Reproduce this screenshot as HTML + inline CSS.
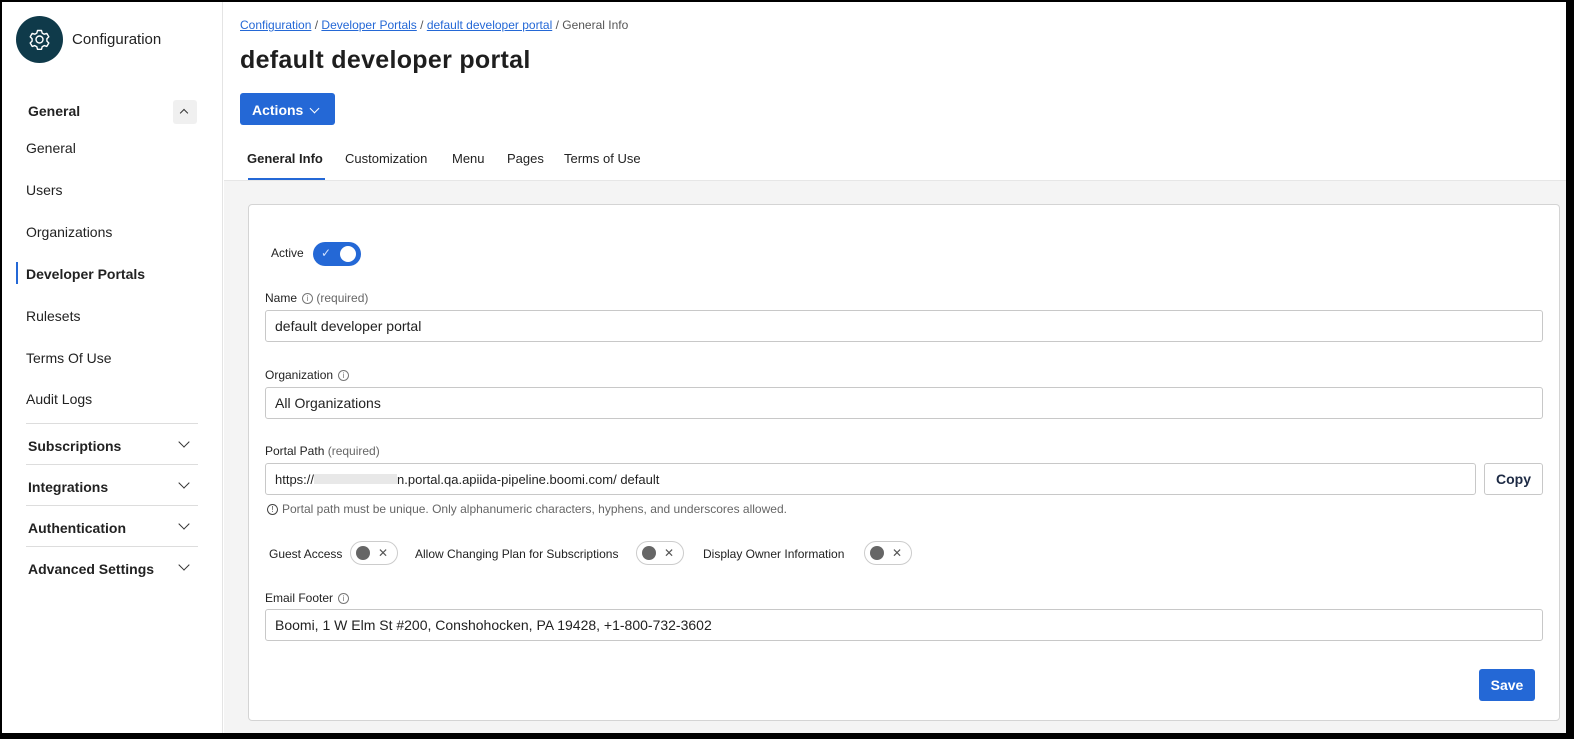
<!DOCTYPE html>
<html><head><style>
*{box-sizing:border-box;margin:0;padding:0}
body{width:1574px;height:739px;background:#000;font-family:"Liberation Sans",sans-serif;color:#222;position:relative;overflow:hidden}
.frame{position:absolute;left:2px;top:2px;width:1564px;height:731px;background:#fff;overflow:hidden}
.a{position:absolute;white-space:nowrap}
.side{position:absolute;left:0;top:0;width:221px;height:731px;background:#fff;border-right:1px solid #e4e4e4}
.nav{font-size:14px;color:#222}
.sec{font-size:14px;font-weight:bold;color:#222}
.hr{position:absolute;left:24px;width:172px;height:1px;background:#ddd}
.chev{position:absolute;width:8px;height:8px;border-right:1.5px solid #333;border-bottom:1.5px solid #333;transform:rotate(45deg)}
.inp{position:absolute;border:1px solid #c8c8c8;border-radius:3px;background:#fff;font-size:14px;padding-left:9px;display:flex;align-items:center}
.lbl{font-size:12px;color:#222}
.req{color:#666}
.info{display:inline-block;width:11px;height:11px;border:1px solid #777;border-radius:50%;font-size:8px;text-align:center;line-height:9px;color:#777;vertical-align:middle;margin-left:5px}
.tog{position:absolute;width:48px;height:24px;border:1px solid #ccc;border-radius:12px;background:#fff}
.tog .k{position:absolute;left:5px;top:4px;width:14px;height:14px;border-radius:50%;background:#666}
.tog .x{position:absolute;right:9px;top:4px;font-size:12px;line-height:14px;color:#555}
</style></head><body>
<div class="frame">
<div class="side">
 <div class="a" style="left:14px;top:14px;width:47px;height:47px;border-radius:50%;background:#0f3a4a">
  <svg width="47" height="47" viewBox="0 0 47 47"><circle cx="23.5" cy="23.5" r="3.5" fill="none" stroke="#fff" stroke-width="1.4"/><path d="M21.5 14.5h4l.7 2.6 2 1.1 2.6-.8 2 3.4-1.9 1.9v2.4l1.9 1.9-2 3.4-2.6-.8-2 1.1-.7 2.6h-4l-.7-2.6-2-1.1-2.6.8-2-3.4 1.9-1.9v-2.4l-1.9-1.9 2-3.4 2.6.8 2-1.1z" fill="none" stroke="#fff" stroke-width="1.4" stroke-linejoin="round"/></svg>
 </div>
 <div class="a" style="left:70px;top:29px;font-size:15px">Configuration</div>
 <div class="a sec" style="left:26px;top:101px">General</div>
 <div class="a" style="left:171px;top:98px;width:24px;height:24px;background:#f0f0f0;border-radius:3px"><div class="chev" style="left:8px;top:10px;transform:rotate(225deg);width:6px;height:6px"></div></div>
 <div class="a nav" style="left:24px;top:138px">General</div>
 <div class="a nav" style="left:24px;top:180px">Users</div>
 <div class="a nav" style="left:24px;top:222px">Organizations</div>
 <div class="a" style="left:14px;top:260px;width:2px;height:22px;background:#2468d6"></div>
 <div class="a nav" style="left:24px;top:264px;font-weight:bold">Developer Portals</div>
 <div class="a nav" style="left:24px;top:306px">Rulesets</div>
 <div class="a nav" style="left:24px;top:348px">Terms Of Use</div>
 <div class="a nav" style="left:24px;top:389px">Audit Logs</div>
 <div class="hr" style="top:421px"></div>
 <div class="a sec" style="left:26px;top:436px">Subscriptions</div><div class="chev" style="left:178px;top:436px"></div>
 <div class="hr" style="top:462px"></div>
 <div class="a sec" style="left:26px;top:477px">Integrations</div><div class="chev" style="left:178px;top:477px"></div>
 <div class="hr" style="top:503px"></div>
 <div class="a sec" style="left:26px;top:518px">Authentication</div><div class="chev" style="left:178px;top:518px"></div>
 <div class="hr" style="top:544px"></div>
 <div class="a sec" style="left:26px;top:559px">Advanced Settings</div><div class="chev" style="left:178px;top:559px"></div>
</div>
<div class="a" style="left:222px;top:178px;width:1342px;height:553px;background:#f4f4f4;border-top:1px solid #e6e6e6"></div>
<div class="a" style="left:238px;top:16px;font-size:12px;color:#555"><u style="color:#2468d6">Configuration</u> / <u style="color:#2468d6">Developer Portals</u> / <u style="color:#2468d6">default developer portal</u> / General Info</div>
<div class="a" style="left:238px;top:44px;font-size:25px;font-weight:bold;color:#1e1e1e;letter-spacing:0.3px">default developer portal</div>
<div class="a" style="left:238px;top:91px;width:95px;height:32px;background:#2468d6;border-radius:3px;color:#fff;font-size:14px;font-weight:bold;padding:9px 0 0 12px">Actions <span style="display:inline-block;width:7px;height:7px;border-right:1.3px solid #fff;border-bottom:1.3px solid #fff;transform:rotate(45deg);margin:0 0 3px 4px"></span></div>
<div class="a" style="left:245px;top:149px;font-size:13px;font-weight:bold">General Info</div>
<div class="a" style="left:246px;top:176px;width:77px;height:2px;background:#2468d6"></div>
<div class="a" style="left:343px;top:149px;font-size:13px">Customization</div>
<div class="a" style="left:450px;top:149px;font-size:13px">Menu</div>
<div class="a" style="left:505px;top:149px;font-size:13px">Pages</div>
<div class="a" style="left:562px;top:149px;font-size:13px">Terms of Use</div>
<div class="a" style="left:246px;top:202px;width:1312px;height:517px;background:#fff;border:1px solid #d4d4d4;border-radius:4px"></div>
<div class="a lbl" style="left:269px;top:244px">Active</div>
<div class="a" style="left:311px;top:240px;width:48px;height:24px;border-radius:12px;background:#2468d6"><span style="position:absolute;left:8px;top:4px;color:#cfe0ff;font-size:12px">✓</span><div style="position:absolute;right:5px;top:4px;width:16px;height:16px;border-radius:50%;background:#fff"></div></div>
<div class="a lbl" style="left:263px;top:289px">Name<span class="info">i</span> <span class="req">(required)</span></div>
<div class="inp" style="left:263px;top:308px;width:1278px;height:32px">default developer portal</div>
<div class="a lbl" style="left:263px;top:366px">Organization<span class="info">i</span></div>
<div class="inp" style="left:263px;top:385px;width:1278px;height:32px">All Organizations</div>
<div class="a lbl" style="left:263px;top:442px">Portal Path <span class="req">(required)</span></div>
<div class="inp" style="left:263px;top:461px;width:1211px;height:32px;font-size:13px">https://<span style="display:inline-block;width:83px;height:10px;background:#e8e8e8"></span>n.portal.qa.apiida-pipeline.boomi.com/ default</div>
<div class="a" style="left:1482px;top:461px;width:59px;height:32px;border:1px solid #c8c8c8;border-radius:3px;font-size:14px;font-weight:bold;color:#1d2a44;text-align:center;line-height:30px">Copy</div>
<div class="a lbl" style="left:265px;top:500px;color:#666"><span class="info" style="margin:0 4px 0 0;border-color:#444;color:#444">!</span>Portal path must be unique. Only alphanumeric characters, hyphens, and underscores allowed.</div>
<div class="a lbl" style="left:267px;top:545px">Guest Access</div>
<div class="tog" style="left:348px;top:539px"><div class="k"></div><div class="x">✕</div></div>
<div class="a lbl" style="left:413px;top:545px">Allow Changing Plan for Subscriptions</div>
<div class="tog" style="left:634px;top:539px"><div class="k"></div><div class="x">✕</div></div>
<div class="a lbl" style="left:701px;top:545px">Display Owner Information</div>
<div class="tog" style="left:862px;top:539px"><div class="k"></div><div class="x">✕</div></div>
<div class="a lbl" style="left:263px;top:589px">Email Footer<span class="info">i</span></div>
<div class="inp" style="left:263px;top:607px;width:1278px;height:32px">Boomi, 1 W Elm St #200, Conshohocken, PA 19428, +1-800-732-3602</div>
<div class="a" style="left:1477px;top:667px;width:56px;height:32px;background:#2468d6;border-radius:3px;color:#fff;font-size:14px;font-weight:bold;text-align:center;line-height:32px">Save</div>
</div>
</body></html>
